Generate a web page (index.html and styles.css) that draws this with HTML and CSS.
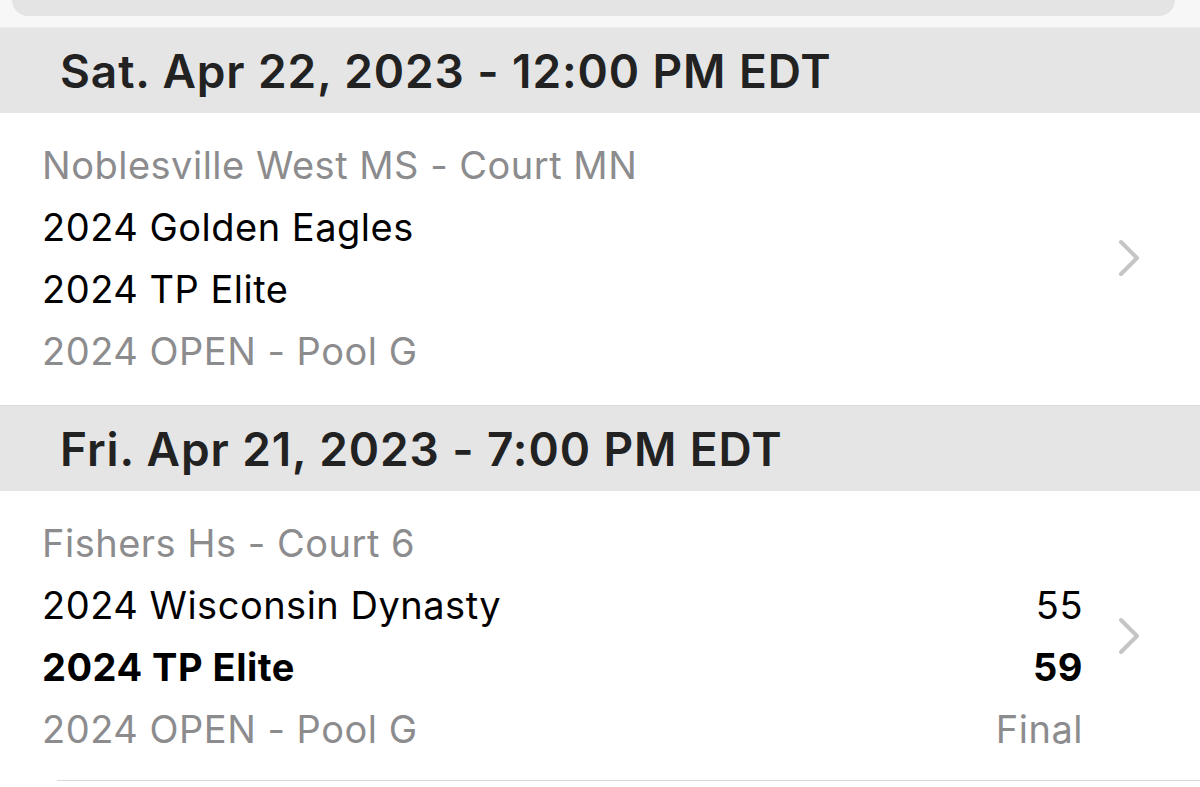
FILE: index.html
```html
<!DOCTYPE html>
<html>
<head>
<meta charset="utf-8">
<link rel="stylesheet" href="styles.css">
</head>
<body>
<div class="topbar"><div class="search"></div></div>

<div class="section-header first">Sat. Apr 22, 2023 - 12:00 PM EDT</div>
<div class="game">
  <div class="lines">
    <div class="line sub">Noblesville West MS - Court MN</div>
    <div class="line"><span>2024 Golden Eagles</span></div>
    <div class="line"><span>2024 TP Elite</span></div>
    <div class="line sub">2024 OPEN - Pool G</div>
  </div>
  <svg class="chev" viewBox="0 0 22 38" width="22" height="38"><path d="M3 3 L19 19 L3 35" fill="none" stroke="#c5c5c8" stroke-width="4" stroke-linecap="round" stroke-linejoin="round"/></svg>
</div>

<div class="section-header">Fri. Apr 21, 2023 - 7:00 PM EDT</div>
<div class="game last">
  <div class="lines">
    <div class="line sub">Fishers Hs - Court 6</div>
    <div class="line"><span>2024 Wisconsin Dynasty</span><span>55</span></div>
    <div class="line win"><span>2024 TP Elite</span><span>59</span></div>
    <div class="line sub"><span>2024 OPEN - Pool G</span><span>Final</span></div>
  </div>
  <svg class="chev" viewBox="0 0 22 38" width="22" height="38"><path d="M3 3 L19 19 L3 35" fill="none" stroke="#c5c5c8" stroke-width="4" stroke-linecap="round" stroke-linejoin="round"/></svg>
</div>
<div class="sep"></div>
</body>
</html>
```

FILE: styles.css
```css
html, body {
  margin: 0;
  padding: 0;
  background: #ffffff;
}
body {
  font-family: Inter, "Liberation Sans", Arial, sans-serif;
  overflow: hidden;
}
.topbar {
  background: #f7f7f7;
  padding: 0 25px 11px 12px;
}
.search {
  height: 16px;
  background: #e4e4e5;
  border-radius: 0 0 16px 16px;
}
.section-header {
  background: #e5e5e5;
  border-top: 1px solid #d9d9d9;
  height: 85px;
  display: flex;
  align-items: center;
  padding-left: 60px;
  font-size: 46px;
  font-weight: 600;
  color: #222222;
  letter-spacing: 0.9px;
}
.section-header.first {
  border-top: 1px solid #ededed;
}
.game {
  display: flex;
  align-items: center;
  padding: 21px 60px 23px 42px;
}
.game.last {
  padding-bottom: 20px;
}
.lines {
  flex: 1;
  margin-right: 35px;
}
.line {
  height: 62px;
  display: flex;
  align-items: center;
  justify-content: space-between;
  font-size: 38px;
  letter-spacing: 0.5px;
  color: #000000;
}
.line.sub {
  color: #8c8c8e;
}
.line.win {
  font-weight: 700;
}
.chev {
  flex: none;
  display: block;
}
.sep {
  height: 1px;
  background: #d8d8d8;
  margin-left: 57px;
}
```
